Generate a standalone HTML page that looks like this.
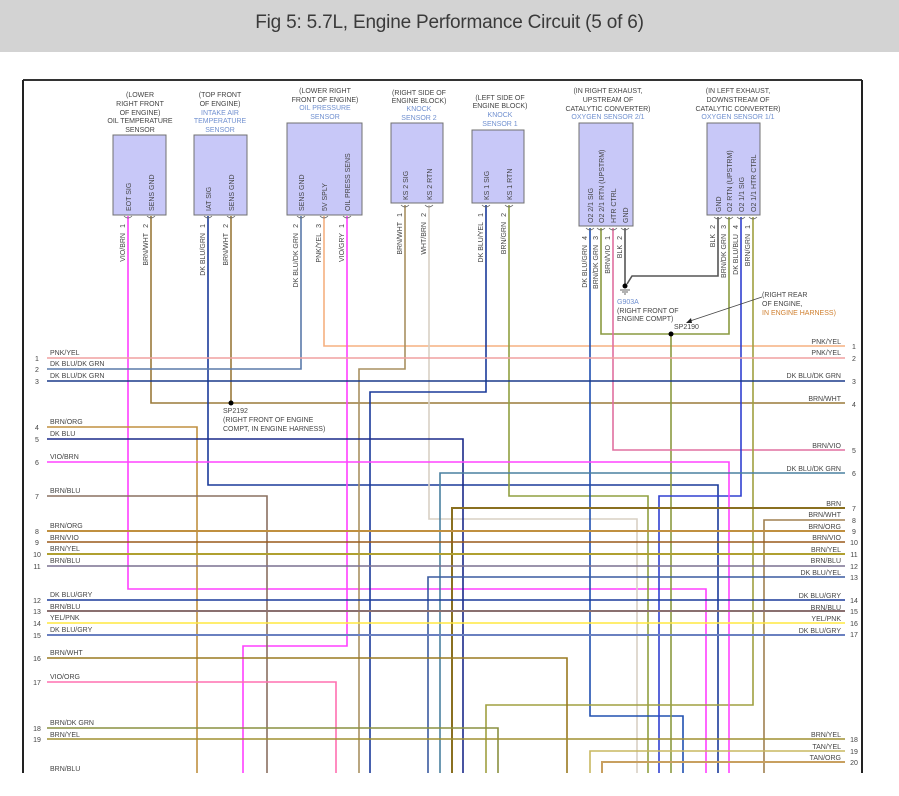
<!DOCTYPE html>
<html><head><meta charset="utf-8"><style>
html,body{margin:0;padding:0;background:#fff;width:899px;height:796px;overflow:hidden}
.hdr{position:absolute;left:0;top:0;width:899px;height:52px;background:#d3d3d3;text-align:center;font-family:"Liberation Sans",sans-serif;font-size:19px;letter-spacing:-0.2px;line-height:46px;color:#3a3a3a}
svg{position:absolute;left:0;top:0}
text{font-family:"Liberation Sans",sans-serif;font-size:7px;fill:#444}
.b{fill:#7090d0}
.o{fill:#d08030}
</style></head><body>
<div class="hdr">Fig 5: 5.7L, Engine Performance Circuit (5 of 6)</div>
<svg width="899" height="796" viewBox="0 0 899 796">
<g fill="none" stroke-width="1.6">
<line x1="23" y1="80" x2="862" y2="80" stroke="#333" stroke-width="2"/>
<line x1="23" y1="80" x2="23" y2="773" stroke="#222" stroke-width="2"/>
<line x1="862" y1="80" x2="862" y2="773" stroke="#222" stroke-width="2"/>

<polyline points="128,216 128,589 706,589 706,773" stroke="#ff40ff"/>
<polyline points="151,216 151,403 845,403" stroke="#9a7a3a"/>
<polyline points="208,216 208,485 718,485 718,773" stroke="#1a3a9a"/>
<polyline points="231,216 231,403" stroke="#9a7a3a"/>
<polyline points="301,216 301,369 47,369" stroke="#5a7aaa"/>
<polyline points="324,216 324,346 845,346" stroke="#f5b080"/>
<polyline points="347,216 347,646 243,646 243,773" stroke="#ff40ff"/>
<polyline points="405,205 405,369 359,369 359,773" stroke="#a89060"/>
<polyline points="429,205 429,519 637,519 637,773" stroke="#d8d0c4"/>
<polyline points="486,205 486,392 370,392 370,773" stroke="#1a3a9a"/>
<polyline points="509,205 509,496 648,496 648,773" stroke="#90a040"/>
<polyline points="590,228 590,716 683,716 683,773" stroke="#2050b0"/>
<polyline points="601,228 601,334 729,334 729,217" stroke="#8a9a40"/>
<polyline points="671,334 671,773" stroke="#8a9a40"/>
<polyline points="613,228 613,450 845,450" stroke="#e070a0"/>
<polyline points="625,228 625,285" stroke="#555"/>
<polyline points="718,217 718,276 632,276 627,284" stroke="#555"/>
<polyline points="741,217 741,496 659,496 659,773" stroke="#3040d0"/>
<polyline points="753,217 753,705 486,705 486,773" stroke="#a0a040"/>

<line x1="47" y1="358" x2="845" y2="358" stroke="#f0a0a0"/>
<line x1="47" y1="381" x2="845" y2="381" stroke="#1a3a8a"/>
<polyline points="47,427 197,427 197,773" stroke="#c09040"/>
<polyline points="47,439 463,439 463,773" stroke="#1a2a8a"/>
<polyline points="47,462 729,462 729,773" stroke="#ff44ff"/>
<polyline points="440,773 440,473 845,473" stroke="#4a80a0"/>
<polyline points="47,496 267,496 267,773" stroke="#8a7060"/>
<polyline points="452,773 452,508 845,508" stroke="#8a7020" stroke-width="2"/>
<polyline points="764,773 764,520 845,520" stroke="#a08050"/>
<line x1="47" y1="531" x2="845" y2="531" stroke="#c09040" stroke-width="2"/>
<line x1="47" y1="542" x2="845" y2="542" stroke="#9a5a1a"/>
<line x1="47" y1="554" x2="845" y2="554" stroke="#b0a030" stroke-width="2"/>
<line x1="47" y1="566" x2="845" y2="566" stroke="#7a7090"/>
<polyline points="428,773 428,577 845,577" stroke="#3a5aa0"/>
<line x1="47" y1="600" x2="845" y2="600" stroke="#1a3a9a"/>
<line x1="47" y1="611" x2="845" y2="611" stroke="#8a7070" stroke-width="2"/>
<line x1="47" y1="623" x2="845" y2="623" stroke="#ffe840"/>
<line x1="47" y1="635" x2="845" y2="635" stroke="#6a80c0" stroke-width="2"/>
<polyline points="47,658 567,658 567,773" stroke="#9a7a20"/>
<polyline points="47,682 336,682 336,773" stroke="#ff70b0"/>
<polyline points="47,728 498,728 498,773" stroke="#8a9040"/>
<line x1="47" y1="739" x2="845" y2="739" stroke="#a09030"/>
<polyline points="590,773 590,751 845,751" stroke="#c8b860"/>
<polyline points="602,773 602,762 845,762" stroke="#c8a060" stroke-width="2"/>
</g>

<g fill="#c8c8f8" stroke="#707070" stroke-width="1">
<rect x="113" y="135" width="53" height="80"/>
<rect x="194" y="135" width="53" height="80"/>
<rect x="287" y="123" width="75" height="92"/>
<rect x="391" y="123" width="52" height="80"/>
<rect x="472" y="130" width="52" height="73"/>
<rect x="579" y="123" width="54" height="103"/>
<rect x="707" y="123" width="53" height="92"/>
</g>
<g fill="none" stroke="#666" stroke-width="0.8">
<path d="M124,216 q4,4 8,0 M147,216 q4,4 8,0 M204,216 q4,4 8,0 M227,216 q4,4 8,0 M297,216 q4,4 8,0 M320,216 q4,4 8,0 M343,216 q4,4 8,0 M401,205 q4,4 8,0 M425,205 q4,4 8,0 M482,205 q4,4 8,0 M505,205 q4,4 8,0 M586,228 q4,4 8,0 M597,228 q4,4 8,0 M609,228 q4,4 8,0 M621,228 q4,4 8,0 M714,217 q4,4 8,0 M725,217 q4,4 8,0 M737,217 q4,4 8,0 M749,217 q4,4 8,0"/>
<line x1="762" y1="297" x2="690" y2="321" stroke="#444"/>
<path d="M620,290 h10 M622,292 h6 M624,294 h2" stroke="#333"/>
</g>
<polygon points="686,323 691,318 692,323" fill="#222"/>
<circle cx="231" cy="403" r="2.5" fill="#000"/>
<circle cx="671" cy="334" r="2.5" fill="#000"/>
<circle cx="625" cy="286" r="2.5" fill="#000"/>

<g text-anchor="middle">
<text x="140" y="97">(LOWER</text><text x="140" y="106">RIGHT FRONT</text><text x="140" y="115">OF ENGINE)</text><text x="140" y="123">OIL TEMPERATURE</text><text x="140" y="132">SENSOR</text>
<text x="220" y="97">(TOP FRONT</text><text x="220" y="106">OF ENGINE)</text><text class="b" x="220" y="115">INTAKE AIR</text><text class="b" x="220" y="123">TEMPERATURE</text><text class="b" x="220" y="132">SENSOR</text>
<text x="325" y="93">(LOWER RIGHT</text><text x="325" y="102">FRONT OF ENGINE)</text><text class="b" x="325" y="110">OIL PRESSURE</text><text class="b" x="325" y="119">SENSOR</text>
<text x="419" y="95">(RIGHT SIDE OF</text><text x="419" y="103">ENGINE BLOCK)</text><text class="b" x="419" y="111">KNOCK</text><text class="b" x="419" y="120">SENSOR 2</text>
<text x="500" y="100">(LEFT SIDE OF</text><text x="500" y="108">ENGINE BLOCK)</text><text class="b" x="500" y="117">KNOCK</text><text class="b" x="500" y="126">SENSOR 1</text>
<text x="608" y="93">(IN RIGHT EXHAUST,</text><text x="608" y="102">UPSTREAM OF</text><text x="608" y="111">CATALYTIC CONVERTER)</text><text class="b" x="608" y="119">OXYGEN SENSOR 2/1</text>
<text x="738" y="93">(IN LEFT EXHAUST,</text><text x="738" y="102">DOWNSTREAM OF</text><text x="738" y="111">CATALYTIC CONVERTER)</text><text class="b" x="738" y="119">OXYGEN SENSOR 1/1</text>
</g>

<g>
<text transform="translate(131,211) rotate(-90)">EOT SIG</text>
<text transform="translate(154,211) rotate(-90)">SENS GND</text>
<text transform="translate(211,211) rotate(-90)">IAT SIG</text>
<text transform="translate(234,211) rotate(-90)">SENS GND</text>
<text transform="translate(304,211) rotate(-90)">SENS GND</text>
<text transform="translate(327,211) rotate(-90)">5V SPLY</text>
<text transform="translate(350,211) rotate(-90)">OIL PRESS SENS</text>
<text transform="translate(408,200) rotate(-90)">KS 2 SIG</text>
<text transform="translate(432,200) rotate(-90)">KS 2 RTN</text>
<text transform="translate(489,200) rotate(-90)">KS 1 SIG</text>
<text transform="translate(512,200) rotate(-90)">KS 1 RTN</text>
<text transform="translate(593,223) rotate(-90)">O2 2/1 SIG</text>
<text transform="translate(604,223) rotate(-90)">O2 2/1 RTN (UPSTRM)</text>
<text transform="translate(616,223) rotate(-90)">HTR CTRL</text>
<text transform="translate(628,223) rotate(-90)">GND</text>
<text transform="translate(721,212) rotate(-90)">GND</text>
<text transform="translate(732,212) rotate(-90)">O2 RTN (UPSTRM)</text>
<text transform="translate(744,212) rotate(-90)">O2 1/1 SIG</text>
<text transform="translate(756,212) rotate(-90)">O2 1/1 HTR CTRL</text>
</g>

<g text-anchor="end">
<text transform="translate(125,224) rotate(-90)">1</text><text transform="translate(125,233) rotate(-90)">VIO/BRN</text>
<text transform="translate(148,224) rotate(-90)">2</text><text transform="translate(148,233) rotate(-90)">BRN/WHT</text>
<text transform="translate(205,224) rotate(-90)">1</text><text transform="translate(205,233) rotate(-90)">DK BLU/GRN</text>
<text transform="translate(228,224) rotate(-90)">2</text><text transform="translate(228,233) rotate(-90)">BRN/WHT</text>
<text transform="translate(298,224) rotate(-90)">2</text><text transform="translate(298,233) rotate(-90)">DK BLU/DK GRN</text>
<text transform="translate(321,224) rotate(-90)">3</text><text transform="translate(321,233) rotate(-90)">PNK/YEL</text>
<text transform="translate(344,224) rotate(-90)">1</text><text transform="translate(344,233) rotate(-90)">VIO/GRY</text>
<text transform="translate(402,213) rotate(-90)">1</text><text transform="translate(402,222) rotate(-90)">BRN/WHT</text>
<text transform="translate(426,213) rotate(-90)">2</text><text transform="translate(426,222) rotate(-90)">WHT/BRN</text>
<text transform="translate(483,213) rotate(-90)">1</text><text transform="translate(483,222) rotate(-90)">DK BLU/YEL</text>
<text transform="translate(506,213) rotate(-90)">2</text><text transform="translate(506,222) rotate(-90)">BRN/GRN</text>
<text transform="translate(587,236) rotate(-90)">4</text><text transform="translate(587,245) rotate(-90)">DK BLU/GRN</text>
<text transform="translate(598,236) rotate(-90)">3</text><text transform="translate(598,245) rotate(-90)">BRN/DK GRN</text>
<text transform="translate(610,236) rotate(-90)">1</text><text transform="translate(610,245) rotate(-90)">BRN/VIO</text>
<text transform="translate(622,236) rotate(-90)">2</text><text transform="translate(622,245) rotate(-90)">BLK</text>
<text transform="translate(715,225) rotate(-90)">2</text><text transform="translate(715,234) rotate(-90)">BLK</text>
<text transform="translate(726,225) rotate(-90)">3</text><text transform="translate(726,234) rotate(-90)">BRN/DK GRN</text>
<text transform="translate(738,225) rotate(-90)">4</text><text transform="translate(738,234) rotate(-90)">DK BLU/BLU</text>
<text transform="translate(750,225) rotate(-90)">1</text><text transform="translate(750,234) rotate(-90)">BRN/GRN</text>
</g>

<text x="223" y="413">SP2192</text>
<text x="223" y="422">(RIGHT FRONT OF ENGINE</text>
<text x="223" y="431">COMPT, IN ENGINE HARNESS)</text>
<text class="b" x="617" y="304">G903A</text>
<text x="617" y="313">(RIGHT FRONT OF</text>
<text x="617" y="321">ENGINE COMPT)</text>
<text x="674" y="329">SP2190</text>
<text x="762" y="297">(RIGHT REAR</text>
<text x="762" y="306">OF ENGINE,</text>
<text class="o" x="762" y="315">IN ENGINE HARNESS)</text>

<g>
<text x="50" y="355">PNK/YEL</text><text x="50" y="366">DK BLU/DK GRN</text><text x="50" y="378">DK BLU/DK GRN</text>
<text x="50" y="424">BRN/ORG</text><text x="50" y="436">DK BLU</text><text x="50" y="459">VIO/BRN</text>
<text x="50" y="493">BRN/BLU</text><text x="50" y="528">BRN/ORG</text><text x="50" y="540">BRN/VIO</text>
<text x="50" y="551">BRN/YEL</text><text x="50" y="563">BRN/BLU</text><text x="50" y="597">DK BLU/GRY</text>
<text x="50" y="609">BRN/BLU</text><text x="50" y="620">YEL/PNK</text><text x="50" y="632">DK BLU/GRY</text>
<text x="50" y="655">BRN/WHT</text><text x="50" y="679">VIO/ORG</text><text x="50" y="725">BRN/DK GRN</text>
<text x="50" y="737">BRN/YEL</text><text x="50" y="771">BRN/BLU</text>
</g>
<g text-anchor="middle">
<text x="37" y="361">1</text><text x="37" y="372">2</text><text x="37" y="384">3</text><text x="37" y="430">4</text>
<text x="37" y="442">5</text><text x="37" y="465">6</text><text x="37" y="499">7</text><text x="37" y="534">8</text>
<text x="37" y="545">9</text><text x="37" y="557">10</text><text x="37" y="569">11</text><text x="37" y="603">12</text>
<text x="37" y="614">13</text><text x="37" y="626">14</text><text x="37" y="638">15</text><text x="37" y="661">16</text>
<text x="37" y="685">17</text><text x="37" y="731">18</text><text x="37" y="742">19</text>
</g>
<g text-anchor="end">
<text x="841" y="344">PNK/YEL</text><text x="841" y="355">PNK/YEL</text><text x="841" y="378">DK BLU/DK GRN</text>
<text x="841" y="401">BRN/WHT</text><text x="841" y="448">BRN/VIO</text><text x="841" y="471">DK BLU/DK GRN</text>
<text x="841" y="506">BRN</text><text x="841" y="517">BRN/WHT</text><text x="841" y="529">BRN/ORG</text>
<text x="841" y="540">BRN/VIO</text><text x="841" y="552">BRN/YEL</text><text x="841" y="563">BRN/BLU</text>
<text x="841" y="575">DK BLU/YEL</text><text x="841" y="598">DK BLU/GRY</text><text x="841" y="610">BRN/BLU</text>
<text x="841" y="621">YEL/PNK</text><text x="841" y="633">DK BLU/GRY</text><text x="841" y="737">BRN/YEL</text>
<text x="841" y="749">TAN/YEL</text><text x="841" y="760">TAN/ORG</text>
</g>
<g text-anchor="middle">
<text x="854" y="349">1</text><text x="854" y="361">2</text><text x="854" y="384">3</text><text x="854" y="407">4</text>
<text x="854" y="453">5</text><text x="854" y="476">6</text><text x="854" y="511">7</text><text x="854" y="523">8</text>
<text x="854" y="534">9</text><text x="854" y="545">10</text><text x="854" y="557">11</text><text x="854" y="569">12</text>
<text x="854" y="580">13</text><text x="854" y="603">14</text><text x="854" y="614">15</text><text x="854" y="626">16</text>
<text x="854" y="637">17</text><text x="854" y="742">18</text><text x="854" y="754">19</text><text x="854" y="765">20</text>
</g>
</svg>
</body></html>
